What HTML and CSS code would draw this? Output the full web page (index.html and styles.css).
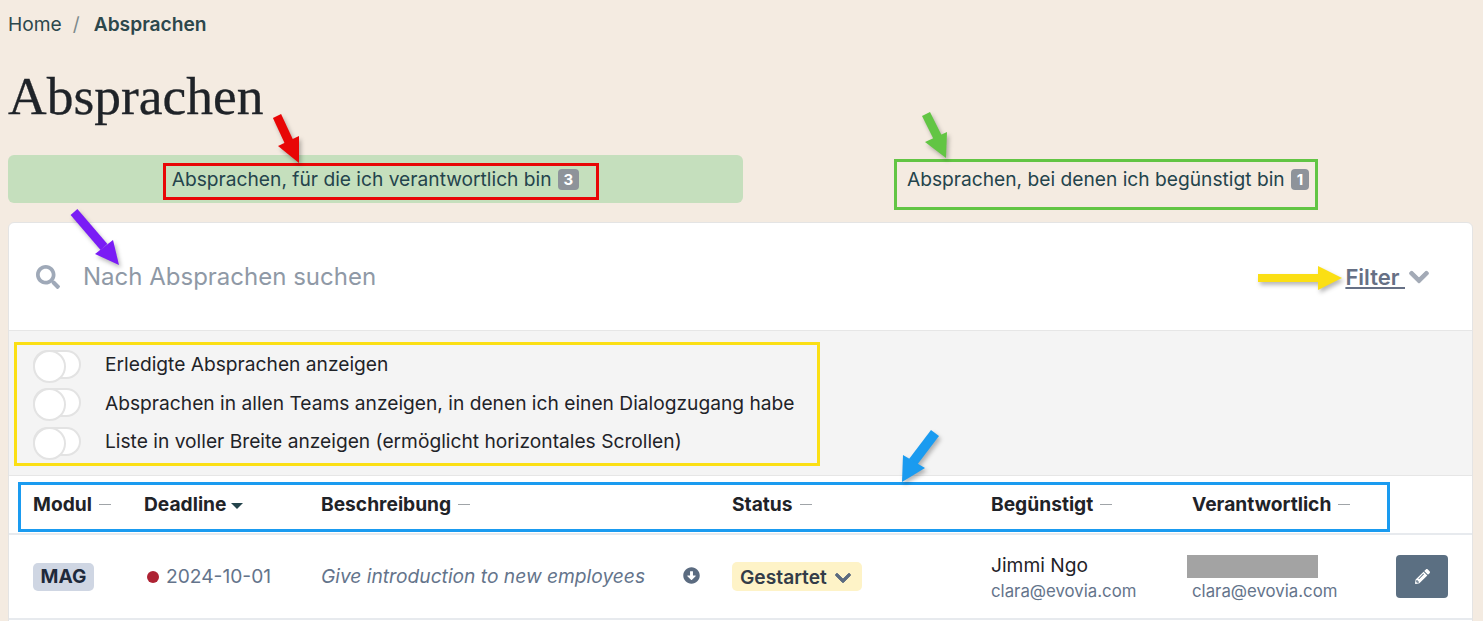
FILE: index.html
```html
<!DOCTYPE html>
<html lang="de">
<head>
<meta charset="utf-8">
<title>Absprachen</title>
<link rel="stylesheet" href="styles.css">
</head>
<body>
<main class="page">
  <nav class="breadcrumb"><a class="crumb">Home</a><span class="sep">/</span><strong class="crumb-current">Absprachen</strong></nav>
  <h1 class="title">Absprachen</h1>
  <div class="tabs">
    <div class="tab tab-active"><span>Absprachen, für die ich verantwortlich bin</span><span class="count">3</span></div>
    <div class="tab"><span>Absprachen, bei denen ich begünstigt bin</span><span class="count">1</span></div>
  </div>
  <section class="card">
    <div class="search">
      <svg class="search-icon" viewBox="0 0 512 512"><path d="M505 442.7L405.3 343c-4.5-4.5-10.6-7-17-7H372c27.6-35.3 44-79.7 44-128C416 93.1 322.9 0 208 0S0 93.1 0 208s93.1 208 208 208c48.3 0 92.7-16.4 128-44v16.3c0 6.4 2.5 12.5 7 17l99.7 99.7c9.4 9.4 24.6 9.4 33.9 0l28.3-28.3c9.4-9.4 9.4-24.6.1-34zM208 336c-70.7 0-128-57.2-128-128 0-70.7 57.2-128 128-128 70.7 0 128 57.2 128 128 0 70.7-57.2 128-128 128z"/></svg>
      <span class="search-text">Nach Absprachen suchen</span>
      <span class="filter"><a class="filter-link">Filter </a><svg class="filter-chevron" viewBox="0 0 448 512"><path d="M207.029 381.476L12.686 187.132c-9.373-9.373-9.373-24.569 0-33.941l22.667-22.667c9.357-9.357 24.522-9.375 33.901-.04L224 284.505l154.745-154.021c9.379-9.335 24.544-9.317 33.901.04l22.667 22.667c9.373 9.373 9.373 24.569 0 33.941L240.971 381.476c-9.373 9.372-24.569 9.372-33.942 0z"/></svg></span>
    </div>
    <div class="options">
      <label class="option"><span class="toggle"></span><span>Erledigte Absprachen anzeigen</span></label>
      <label class="option"><span class="toggle"></span><span>Absprachen in allen Teams anzeigen, in denen ich einen Dialogzugang habe</span></label>
      <label class="option"><span class="toggle"></span><span>Liste in voller Breite anzeigen (ermöglicht horizontales Scrollen)</span></label>
    </div>
    <div class="grid head">
      <div class="th">Modul<i class="dash"></i></div>
      <div class="th">Deadline<i class="caret"></i></div>
      <div class="th">Beschreibung<i class="dash"></i></div>
      <div class="th">Status<i class="dash"></i></div>
      <div class="th">Begünstigt<i class="dash"></i></div>
      <div class="th">Verantwortlich<i class="dash"></i></div>
      <div></div>
    </div>
    <div class="grid row">
      <div><span class="module">MAG</span></div>
      <div class="deadline"><i class="dot"></i>2024-10-01</div>
      <div class="desc"><em>Give introduction to new employees</em>
        <svg class="down" viewBox="0 0 512 512"><path d="M504 256c0 137-111 248-248 248S8 393 8 256 119 8 256 8s248 111 248 248zM212 140v116h-70.9c-10.7 0-16.1 13-8.5 20.5l114.9 114.3c4.7 4.7 12.2 4.7 16.9 0l114.9-114.3c7.6-7.6 2.2-20.5-8.5-20.5H300V140c0-6.6-5.4-12-12-12h-64c-6.6 0-12 5.4-12 12z"/></svg>
      </div>
      <div><span class="status">Gestartet<svg class="status-chevron" viewBox="0 0 448 512"><path d="M207.029 381.476L12.686 187.132c-9.373-9.373-9.373-24.569 0-33.941l22.667-22.667c9.357-9.357 24.522-9.375 33.901-.04L224 284.505l154.745-154.021c9.379-9.335 24.544-9.317 33.901.04l22.667 22.667c9.373 9.373 9.373 24.569 0 33.941L240.971 381.476c-9.373 9.372-24.569 9.372-33.942 0z"/></svg></span></div>
      <div class="person"><span class="name">Jimmi Ngo</span><span class="mail">clara@evovia.com</span></div>
      <div class="person"><span class="name name-hidden"><i class="redacted"></i></span><span class="mail">clara@evovia.com</span></div>
      <div><button class="edit" type="button"><svg class="pencil" viewBox="0 0 512 512"><path d="M497.9 142.1l-46.1 46.1c-4.7 4.7-12.3 4.7-17 0l-111-111c-4.7-4.7-4.7-12.3 0-17l46.1-46.1c18.7-18.7 49.1-18.7 67.9 0l60.1 60.1c18.8 18.7 18.8 49.1 0 67.9zM284.2 99.8L21.6 362.4.4 483.9c-2.9 16.4 11.4 30.6 27.8 27.8l121.5-21.3 262.6-262.6c4.7-4.7 4.7-12.3 0-17l-111-111c-4.8-4.7-12.4-4.7-17.1 0zM124.1 339.9c-5.5-5.5-5.5-14.3 0-19.8l154-154c5.5-5.5 14.3-5.5 19.8 0s5.5 14.3 0 19.8l-154 154c-5.5 5.5-14.3 5.5-19.8 0zM88 424h48v36.3l-64.5 11.3-31.1-31.1L51.7 376H88v48z"/></svg></button></div>
    </div>
  </section>
</main>
<div class="marks">
  <div class="box box-red"></div>
  <div class="box box-green"></div>
  <div class="box box-yellow"></div>
  <div class="box box-blue"></div>
  <svg class="arrows" viewBox="0 0 1483 621" width="1483" height="621">
    <g class="arrow" fill="#e80606" stroke="#e80606"><line x1="277" y1="116" x2="290" y2="144" stroke-width="9"/><polygon stroke="none" points="278,146 299,136 299,163"/></g>
    <g class="arrow" fill="#62c544" stroke="#62c544"><line x1="926" y1="114" x2="938" y2="138" stroke-width="9"/><polygon stroke="none" points="925,142 947,132 946,158"/></g>
    <g class="arrow" fill="#7a1cf5" stroke="#7a1cf5"><line x1="74" y1="212" x2="104" y2="247" stroke-width="9"/><polygon stroke="none" points="95,254 113,240 119,265"/></g>
    <g class="arrow" fill="#fbdf14" stroke="#fbdf14"><line x1="1258" y1="278" x2="1320" y2="278" stroke-width="8"/><polygon stroke="none" points="1318,266 1342,278 1318,290"/></g>
    <g class="arrow" fill="#1a9bf0" stroke="#1a9bf0"><line x1="935" y1="433" x2="913" y2="462" stroke-width="10"/><polygon stroke="none" points="903,455 925,468 902,482"/></g>
  </svg>
</div>
</body>
</html>
```
FILE: styles.css
```css
* { box-sizing: border-box; }
html, body { height: 100%; }
body {
  margin: 0;
  background: #f4ebe1;
  font-family: Inter, "Liberation Sans", sans-serif;
  font-size: 19.2px;
  color: #1f2328;
  overflow: hidden;
  position: relative;
}
.page { padding: 0 10px 0 8px; }
.breadcrumb {
  display: flex;
  align-items: center;
  height: 24px;
  margin-top: 12px;
  color: #2c474c;
}
.sep { margin: 0 14px 0 11px; color: #7d8a8c; }
.crumb-current { font-weight: 600; }
.title {
  margin: 20px 0 0;
  height: 99px;
  font-family: "Liberation Serif", serif;
  font-weight: 400;
  font-size: 53.5px;
  line-height: 80px;
  color: #1f2328;
  -webkit-text-stroke: .3px #1f2328;
}
.tabs { display: grid; grid-template-columns: 735px 1fr; height: 48px; }
.tab {
  display: flex;
  align-items: center;
  justify-content: center;
  gap: 6px;
  border-radius: 6px;
  color: #24444c;
}
.tab-active { background: #c5dfbd; }
.count {
  display: inline-flex;
  align-items: center;
  justify-content: center;
  padding: 0 6px;
  height: 21px;
  border-radius: 4px;
  background: #8e939a;
  color: #fff;
  font-size: 15px;
  font-weight: 700;
}
.card {
  margin-top: 19px;
  height: 420px;
  background: #fff;
  border: 1px solid #e4e4e4;
  border-radius: 6px 6px 0 0;
}
.search {
  display: flex;
  align-items: center;
  height: 108px;
  padding: 0 43px 0 27px;
  border-bottom: 1px solid #e6e6e6;
}
.search-icon { width: 24px; height: 24px; fill: #9fa9b8; }
.search-text { margin-left: 23px; font-size: 24px; color: #8f99a6; }
.filter { margin-left: auto; display: flex; align-items: center; gap: 4px; }
.filter-link {
  font-size: 22px;
  font-weight: 600;
  color: #667085;
  text-decoration: underline;
  white-space: pre;
}
.filter-chevron { width: 20px; height: 22px; fill: #a3aab6; stroke: #a3aab6; stroke-width: 24; }
.options {
  height: 145px;
  padding: 14px 24px 0;
  background: #f4f4f4;
  border-bottom: 1px solid #e6e6e6;
}
.option { display: flex; align-items: center; height: 38.5px; }
.toggle {
  position: relative;
  width: 48px;
  height: 29px;
  margin-right: 24px;
  border: 2px solid #e3e3e3;
  border-radius: 15px;
  background: #fff;
}
.toggle::after {
  content: "";
  position: absolute;
  left: -2px;
  top: -2px;
  width: 29px;
  height: 29px;
  border: 2px solid #e3e3e3;
  border-radius: 50%;
  background: #fff;
}
.grid {
  display: grid;
  grid-template-columns: 111px 177px 411px 259px 201px 204px 1fr;
  padding-left: 24px;
  align-items: center;
}
.head {
  height: 59px;
  padding-bottom: 2px;
  border-bottom: 2px solid #e7eaee;
  font-weight: 700;
}
.th { display: flex; align-items: center; }
.dash { width: 12px; height: 1px; margin: 2px 0 0 7px; background: #a0a4a8; }
.caret {
  width: 0;
  height: 0;
  margin: 4px 0 0 5px;
  border: 6px solid transparent;
  border-bottom: 0;
  border-top-color: #24444c;
}
.row { height: 85px; border-bottom: 2px solid #e7eaee; }
.module {
  display: inline-block;
  padding: 0 7.5px;
  height: 28px;
  line-height: 27px;
  border-radius: 5px;
  background: #cfd6e3;
  color: #1e293b;
  font-weight: 700;
}
.deadline { display: flex; align-items: center; padding-bottom: 1.5px; color: #64748b; }
.dot { width: 12px; height: 12px; margin: 2px 7px 0 3px; border-radius: 50%; background: #ae2233; }
.desc { display: flex; align-items: center; color: #64748b; padding: 0 32px 1.5px 0; justify-content: space-between; }
.down { width: 17px; height: 17px; fill: #5b6b80; }
.status {
  display: inline-flex;
  align-items: center;
  height: 29px;
  padding: 0 11px 0 8px;
  border-radius: 5px;
  background: #fef3c7;
  color: #333c48;
  font-weight: 600;
}
.status-chevron { width: 16px; height: 18px; margin: 3px 0 0 8px; fill: #5b6b80; stroke: #5b6b80; stroke-width: 24; }
.person { display: flex; flex-direction: column; gap: 1.5px; padding-top: 3.5px; }
.name { line-height: 24px; }
.mail { font-size: 16.8px; line-height: 26px; color: #64748b; }
.name-hidden { height: 24px; }
.redacted { display: block; width: 131px; height: 23px; margin: 2.5px 0 0 -5px; background: #a3a3a3; }
.edit {
  display: flex;
  align-items: center;
  justify-content: center;
  width: 52px;
  height: 43px;
  padding: 0;
  border: 0;
  border-radius: 4px;
  background: #5b6f82;
}
.pencil { width: 15px; height: 15px; fill: #fff; }
.marks { position: absolute; inset: 0; pointer-events: none; }
.box { position: absolute; border: 3px solid; }
.box-red { left: 163px; top: 163px; width: 436px; height: 37px; border-color: #e80606; }
.box-green { left: 894px; top: 159px; width: 424px; height: 51px; border-color: #62c544; }
.box-yellow { left: 14px; top: 342px; width: 806px; height: 124px; border-color: #fbdf14; }
.box-blue { left: 18px; top: 482px; width: 1372px; height: 50px; border-color: #1a9bf0; }
.arrows { position: absolute; left: 0; top: 0; }
.arrow { filter: drop-shadow(2px 3px 2px rgba(0, 0, 0, .28)); }
```
